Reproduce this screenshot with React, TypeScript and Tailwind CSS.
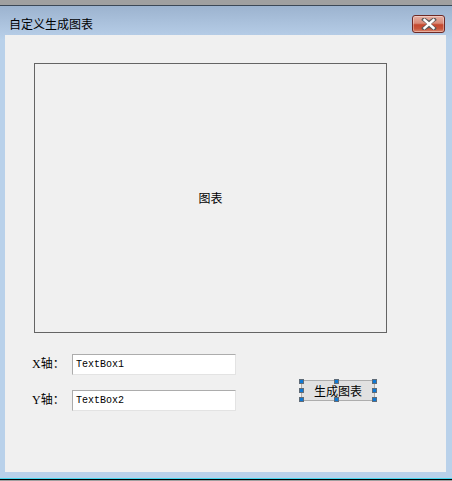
import React from "react";

const cjk = { fontFamily: '"Noto Sans CJK SC", "Noto Sans", sans-serif' };
const label = { fontFamily: '"Liberation Serif", "Noto Sans CJK SC", serif' };
const mono = { fontFamily: '"Liberation Mono", "Noto Sans CJK SC", monospace' };

function Handle({ className }: { className: string }) {
  return (
    <span
      className={`absolute w-[5px] h-[5px] border border-[#5f6b77] bg-[#0f78d4] ${className}`}
    />
  );
}

function CloseButton() {
  return (
    <div className="w-[33px] h-[18px] rounded-[3px] border border-[#6e2a26] bg-[linear-gradient(to_bottom,#e6b0a4_0%,#d88a78_45%,#c4482f_55%,#c9563c_80%,#dc8c74_100%)] flex items-center justify-center shadow-[inset_0_0_0_1px_rgba(255,255,255,0.35)]">
      <svg width="16" height="12" viewBox="0 0 16 12">
        <path
          d="M3 1.5 L8 5 L13 1.5 M3 10.5 L8 7 L13 10.5 M8 5 L8 7"
          stroke="#5a5a5a"
          strokeWidth="4"
          strokeLinecap="square"
          fill="none"
        />
        <path
          d="M3.5 2 L12.5 10 M12.5 2 L3.5 10"
          stroke="#ffffff"
          strokeWidth="2.4"
          strokeLinecap="square"
          fill="none"
        />
      </svg>
    </div>
  );
}

function Field({ text, value }: { text: string; value: string }) {
  return (
    <div className="flex items-center">
      <span className="w-[40px] text-[12px] leading-none text-black -mt-[2px]" style={label}>
        {text}
      </span>
      <div
        className="w-[164px] h-[21px] bg-white border-t border-l border-[#acacac] border-b-[#e3e3e3] border-r-[#e3e3e3] border-b border-r flex items-center pl-[3px] text-[10px] text-black"
        style={mono}
      >
        {value}
      </div>
    </div>
  );
}

export default function App() {
  return (
    <div className="w-[452px] h-[481px] flex flex-col bg-[#a0a0a0]">
      <div className="h-[5px] shrink-0" />
      <div className="h-px shrink-0 bg-[#3c4856]" />
      <div className="flex-1 flex flex-col bg-[linear-gradient(to_bottom,#9cb3cf_0px,#b5cce6_29px,#b9d1ea_34px)]">
        <div className="h-[29px] shrink-0 flex items-center pt-[6px] pl-[9px] pr-[7px]">
          <span className="flex-1 text-[12px] leading-none text-black" style={cjk}>
            自定义生成图表
          </span>
          <CloseButton />
        </div>
        <div className="ml-[5px] w-[441px] h-[437px] bg-[#f0f0f0] flex flex-col">
          <div
            className="ml-[29px] mt-[28px] w-[353px] h-[270px] border border-[#646464] flex items-center justify-center text-[12px] text-black"
            style={cjk}
          >
            图表
          </div>
          <div className="mt-[21px] ml-[27px] flex items-start">
            <div className="flex flex-col gap-[15px]">
              <Field text="X轴：" value="TextBox1" />
              <Field text="Y轴：" value="TextBox2" />
            </div>
            <div className="relative ml-[65px] mt-[26px] w-[74px] h-[21px] border border-[#adadad] bg-[#e1e1e1] flex items-center justify-center text-[12px] text-black" style={cjk}>
              生成图表
              <Handle className="top-[-2px] left-[-3px]" />
              <Handle className="top-[-2px] left-[32px]" />
              <Handle className="top-[-2px] right-[-3px]" />
              <Handle className="top-[7px] left-[-3px]" />
              <Handle className="top-[7px] right-[-3px]" />
              <Handle className="bottom-[-2px] left-[-3px]" />
              <Handle className="bottom-[-2px] left-[32px]" />
              <Handle className="bottom-[-2px] right-[-3px]" />
            </div>
          </div>
        </div>
        <div className="flex-1" />
      </div>
      <div className="h-px shrink-0 bg-[#46d6ee]" />
      <div className="h-px shrink-0 bg-black" />
      <div className="h-px shrink-0" />
    </div>
  );
}
